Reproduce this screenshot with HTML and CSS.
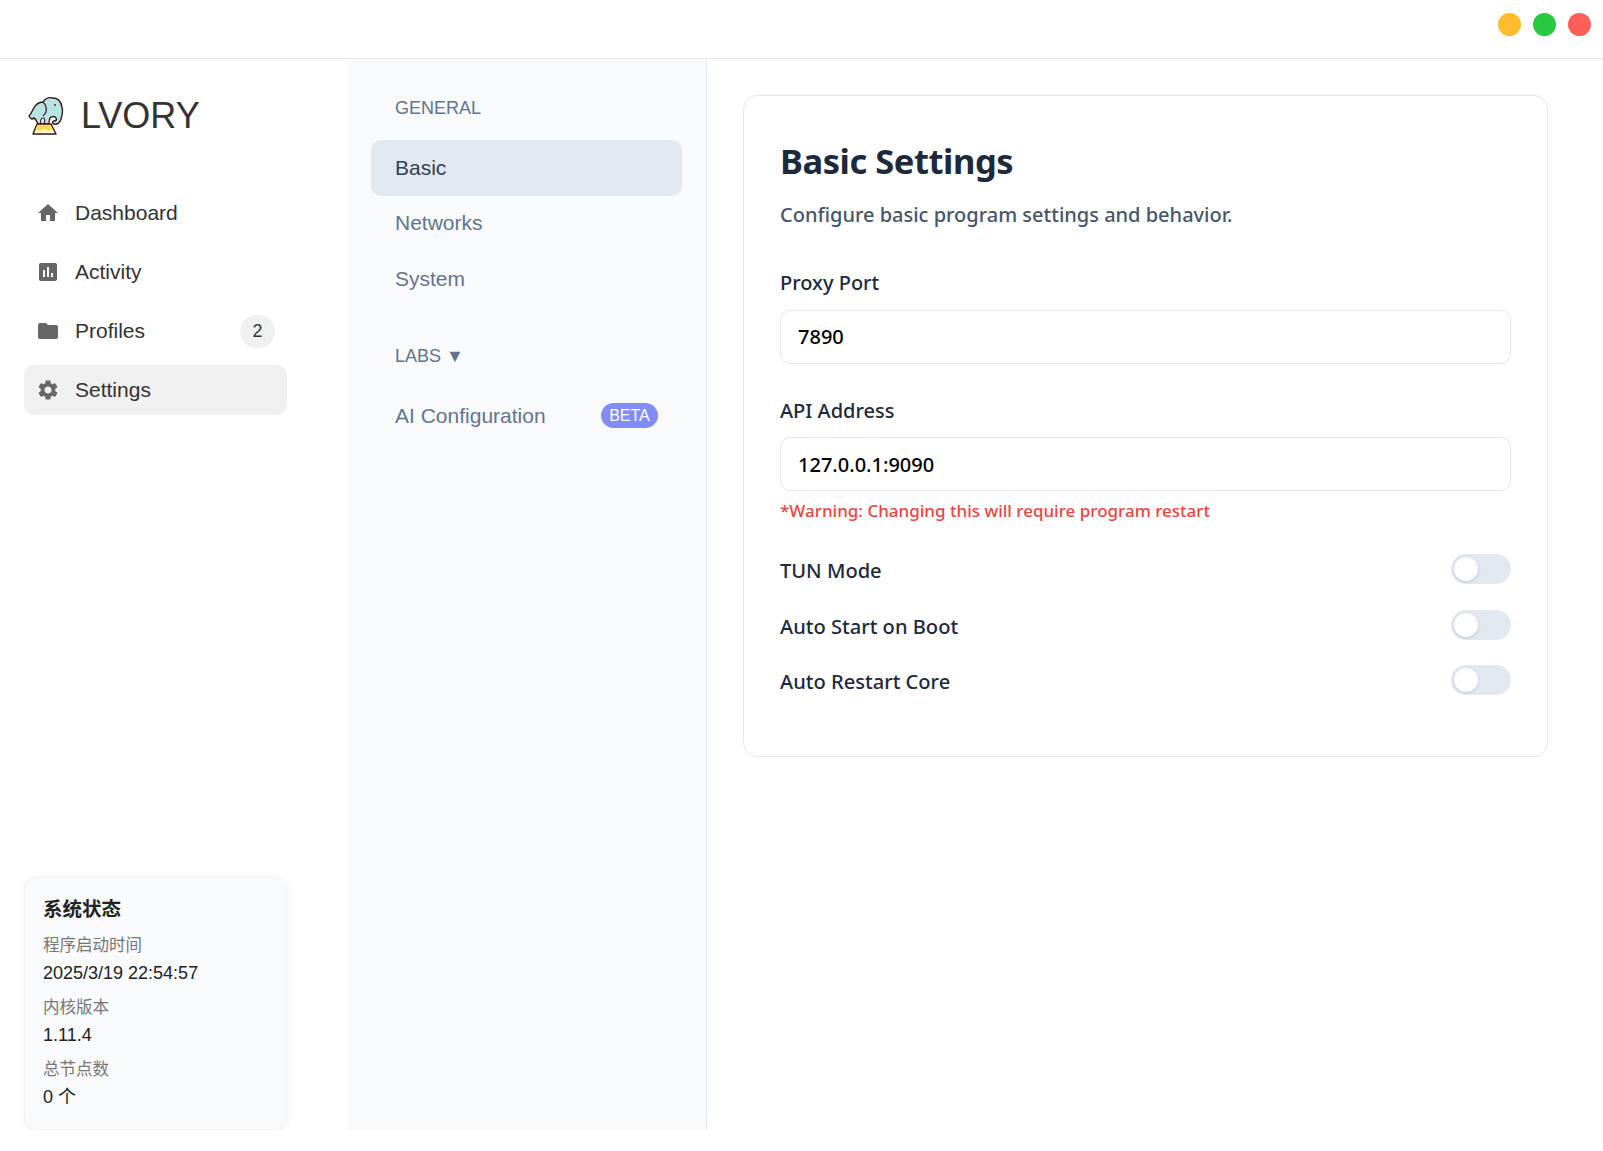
FILE: index.html
```html
<!DOCTYPE html>
<html lang="en">
<head>
<meta charset="UTF-8">
<title>LVORY</title>
<link rel="stylesheet" href="styles.css">
</head>
<body>
<div class="app">
    <header class="titlebar">
        <span class="dot dot-min"></span>
        <span class="dot dot-max"></span>
        <span class="dot dot-close"></span>
    </header>
    <div class="main">
        <aside class="sidebar">
            <div class="brand">
                <svg class="brand-logo" viewBox="0 0 36 40" width="36" height="40">
                    <path d="M4 23C2 22 1 21 1 20C4 17 5 12 8 9C10 7 13 6 15 6C17 3 21 1 25 2C30 2 33 6 34 11C35 15 34 20 33 23C32 27 29 29 26 28C24 28 24 25 26 25C28 25 29 24 28 22C27 20 24 20 22 22C21 24 21 26 21 28H10C9 26 8 23 6 22Z" fill="#b9e4e4" stroke="#3b1518" stroke-width="1.4" stroke-linejoin="round"/>
                    <path d="M15 6C17 8 19 12 18 16C17 18 16 19 15 20" fill="none" stroke="#3b1518" stroke-width="1.2"/>
                    <path d="M13 28C12 25 13 22 15 22C17 22 17 25 16 28Z" fill="#f4fbfb" stroke="#3b1518" stroke-width="1.2"/>
                    <path d="M9 28H23L28 38H5Z" fill="#fdf8d0" stroke="#3b1518" stroke-width="1.4" stroke-linejoin="round"/>
                    <path d="M9.5 29H22.5L24.5 33L20 35L16.500 33L12 35L7.500 33Z" fill="#f6d94c"/>
                    <circle cx="27" cy="9" r="0.9" fill="#3b1518"/>
                </svg>
                <span class="brand-name">LVORY</span>
            </div>
            <nav class="nav">
                <a class="nav-item">
                    <svg class="nav-icon" viewBox="0 0 24 24"><path d="M10 20v-6h4v6h5v-8h3L12 3 2 12h3v8z"/></svg>
                    <span>Dashboard</span>
                </a>
                <a class="nav-item">
                    <svg class="nav-icon" viewBox="0 0 24 24"><path d="M19 3H5c-1.1 0-2 .9-2 2v14c0 1.1.9 2 2 2h14c1.1 0 2-.9 2-2V5c0-1.1-.9-2-2-2zM9 17H7v-7h2v7zm4 0h-2V7h2v10zm4 0h-2v-4h2v4z"/></svg>
                    <span>Activity</span>
                </a>
                <a class="nav-item">
                    <svg class="nav-icon" viewBox="0 0 24 24"><path d="M10 4H4c-1.1 0-1.99.9-1.99 2L2 18c0 1.1.9 2 2 2h16c1.1 0 2-.9 2-2V8c0-1.1-.9-2-2-2h-8l-2-2z"/></svg>
                    <span>Profiles</span>
                    <span class="count">2</span>
                </a>
                <a class="nav-item active">
                    <svg class="nav-icon" viewBox="0 0 24 24"><path d="M19.14 12.94c.04-.3.06-.61.06-.94 0-.32-.02-.64-.07-.94l2.03-1.58c.18-.14.23-.41.12-.61l-1.92-3.32c-.12-.22-.37-.29-.59-.22l-2.39.96c-.5-.38-1.03-.7-1.62-.94l-.36-2.54c-.04-.24-.24-.41-.48-.41h-3.84c-.24 0-.43.17-.47.41l-.36 2.54c-.59.24-1.13.57-1.62.94l-2.39-.96c-.22-.08-.47 0-.59.22L2.74 8.87c-.12.21-.08.47.12.61l2.03 1.58c-.05.3-.09.63-.09.94s.02.64.07.94l-2.03 1.58c-.18.14-.23.41-.12.61l1.92 3.32c.12.22.37.29.59.22l2.39-.96c.5.38 1.03.7 1.62.94l.36 2.54c.05.24.24.41.48.41h3.84c.24 0 .44-.17.47-.41l.36-2.54c.59-.24 1.13-.56 1.62-.94l2.39.96c.22.08.47 0 .59-.22l1.92-3.32c.12-.22.07-.47-.12-.61l-2.01-1.58zM12 15.6c-1.98 0-3.6-1.62-3.6-3.6s1.62-3.6 3.6-3.6 3.6 1.62 3.6 3.6-1.62 3.6-3.6 3.6z"/></svg>
                    <span>Settings</span>
                </a>
            </nav>
            <div class="status-card">
                <h3 class="status-title">系统状态</h3>
                <div class="status-label">程序启动时间</div>
                <div class="status-value">2025/3/19 22:54:57</div>
                <div class="status-label">内核版本</div>
                <div class="status-value">1.11.4</div>
                <div class="status-label">总节点数</div>
                <div class="status-value">0 个</div>
            </div>
        </aside>
        <div class="subnav">
            <div class="subnav-head">GENERAL</div>
            <a class="subnav-item current">Basic</a>
            <a class="subnav-item">Networks</a>
            <a class="subnav-item">System</a>
            <div class="subnav-head labs">LABS ▼</div>
            <a class="subnav-item">AI Configuration <span class="beta">BETA</span></a>
        </div>
        <main class="content">
            <section class="card">
                <h2 class="card-title">Basic Settings</h2>
                <p class="card-desc">Configure basic program settings and behavior.</p>
                <div class="field">
                    <label class="field-label">Proxy Port</label>
                    <input class="field-input" type="text" value="7890">
                </div>
                <div class="field">
                    <label class="field-label">API Address</label>
                    <input class="field-input" type="text" value="127.0.0.1:9090">
                    <div class="warning">*Warning: Changing this will require program restart</div>
                </div>
                <div class="toggles">
                    <div class="toggle-row"><span class="toggle-label">TUN Mode</span><span class="toggle"></span></div>
                    <div class="toggle-row"><span class="toggle-label">Auto Start on Boot</span><span class="toggle"></span></div>
                    <div class="toggle-row"><span class="toggle-label">Auto Restart Core</span><span class="toggle"></span></div>
                </div>
            </section>
        </main>
    </div>
</div>
</body>
</html>
```

FILE: styles.css
```css
*{
    box-sizing: border-box;
}
body{
    margin: 0;
    background-color: #fff;
    font-family: "Liberation Sans", "Noto Sans CJK SC", sans-serif;
    color: #333;
}
.app{
    height: 1130px;
    display: flex;
    flex-direction: column;
}
.titlebar{
    height: 59px;
    flex: none;
    border-bottom: 1px solid #e8e8ec;
    display: flex;
    justify-content: flex-end;
    align-items: center;
    gap: 12px;
    padding: 0 12px 10px 0;
}
.dot{
    width: 23px;
    height: 23px;
    border-radius: 50%;
}
.dot-min{ background-color: #ffbd2e; }
.dot-max{ background-color: #28c940; }
.dot-close{ background-color: #ff5f57; }

.main{
    flex: 1;
    display: flex;
    min-height: 0;
}

/* left sidebar */
.sidebar{
    width: 347px;
    flex: none;
    padding: 0 60px 0 24px;
    display: flex;
    flex-direction: column;
}
.brand{
    display: flex;
    align-items: flex-start;
    gap: 17px;
    padding: 37px 0 0 4px;
    height: 129px;
}
.brand-logo{
    flex: none;
}
.brand-name{
    font-size: 36px;
    line-height: 40px;
    color: #333;
}
.nav{
    display: flex;
    flex-direction: column;
    gap: 9px;
}
.nav-item{
    height: 50px;
    display: flex;
    align-items: center;
    gap: 15px;
    padding: 0 12px;
    border-radius: 10px;
    font-size: 21px;
    color: #333;
}
.nav-item.active{
    background-color: #f0f0f0;
}
.nav-icon{
    width: 24px;
    height: 24px;
    flex: none;
    fill: #666;
}
.count{
    margin-left: auto;
    width: 35px;
    height: 33px;
    border-radius: 17px;
    background-color: #f0f0f0;
    display: flex;
    align-items: center;
    justify-content: center;
    font-size: 18px;
}
.status-card{
    margin-top: auto;
    padding: 20px 18px 0;
    height: 254px;
    background-color: #f8fafc;
    border: 1px solid #f0f2f5;
    border-radius: 14px;
    box-shadow: 0 2px 8px rgba(0,0,0,0.06);
}
.status-title{
    margin: 0 0 10px;
    font-size: 19.5px;
    line-height: 24px;
    font-weight: bold;
    color: #222;
}
.status-label{
    font-size: 16.5px;
    line-height: 28px;
    color: #777;
}
.status-value{
    font-size: 18px;
    line-height: 28px;
    margin-bottom: 6px;
    color: #222;
}

/* settings sub navigation */
.subnav{
    width: 360px;
    flex: none;
    background-color: #f8fafc;
    border-right: 1px solid #e2e8f0;
    padding: 37px 24px 0;
    color: #64748b;
}
.subnav-head{
    padding-left: 24px;
    font-size: 18px;
    line-height: 24px;
    color: #64748b;
    margin-bottom: 20px;
}
.subnav-head.labs{
    margin-top: 37px;
    margin-bottom: 20px;
}
.subnav-item{
    height: 55.6px;
    display: flex;
    align-items: center;
    justify-content: space-between;
    padding: 0 24px;
    border-radius: 10px;
    font-size: 21px;
    color: #64748b;
}
.subnav-item.current{
    background-color: #e2e8f0;
    color: #334155;
}
.beta{
    width: 57px;
    height: 25px;
    border-radius: 13px;
    background-color: #818cf8;
    color: #fff;
    font-size: 16px;
    display: flex;
    align-items: center;
    justify-content: center;
}

/* right panel */
.content{
    flex: 1;
    padding: 36px 55px 0 36px;
    font-family: "Noto Sans", "Noto Sans CJK SC", sans-serif;
}
.card{
    height: 662px;
    border: 1px solid #e2e8f0;
    border-radius: 14px;
    padding: 37px 36px 0;
    background-color: #fff;
}
.card-title{
    margin: 0;
    font-size: 34.5px;
    line-height: 56px;
    letter-spacing: -0.45px;
    font-weight: bold;
    color: #1e293b;
}
.card-desc{
    margin: 12px 0 40px;
    font-size: 20px;
    line-height: 28px;
    font-weight: 500;
    color: #475569;
}
.field{
    margin-top: 33px;
}
.card-desc + .field{
    margin-top: 0;
}
.field-label{
    display: block;
    font-size: 20px;
    line-height: 28px;
    font-weight: 500;
    color: #1e293b;
    margin-bottom: 12.5px;
}
.field-input{
    display: block;
    width: 100%;
    height: 54px;
    padding: 0 17px;
    border: 1px solid #e2e8f0;
    border-radius: 10px;
    font-family: inherit;
    font-size: 20px;
    font-weight: 500;
    color: #000;
    background-color: #fff;
    outline: none;
}
.warning{
    margin-top: 8px;
    font-size: 17px;
    line-height: 24px;
    font-weight: 500;
    color: #ef4444;
}
.toggles{
    margin-top: 18px;
}
.toggle-row{
    height: 55.7px;
    display: flex;
    align-items: center;
    justify-content: space-between;
    font-size: 20.1px;
    font-weight: 500;
    color: #1e293b;
}
.toggle-label{
    padding-top: 3px;
}
.toggle{
    position: relative;
    width: 60px;
    height: 30px;
    border-radius: 15px;
    background-color: #e2e8f0;
}
.toggle::after{
    content: "";
    position: absolute;
    left: 3px;
    top: 3px;
    width: 24px;
    height: 24px;
    border-radius: 50%;
    background-color: #fff;
    box-shadow: 0 1px 3px rgba(0,0,0,0.15);
}
```
